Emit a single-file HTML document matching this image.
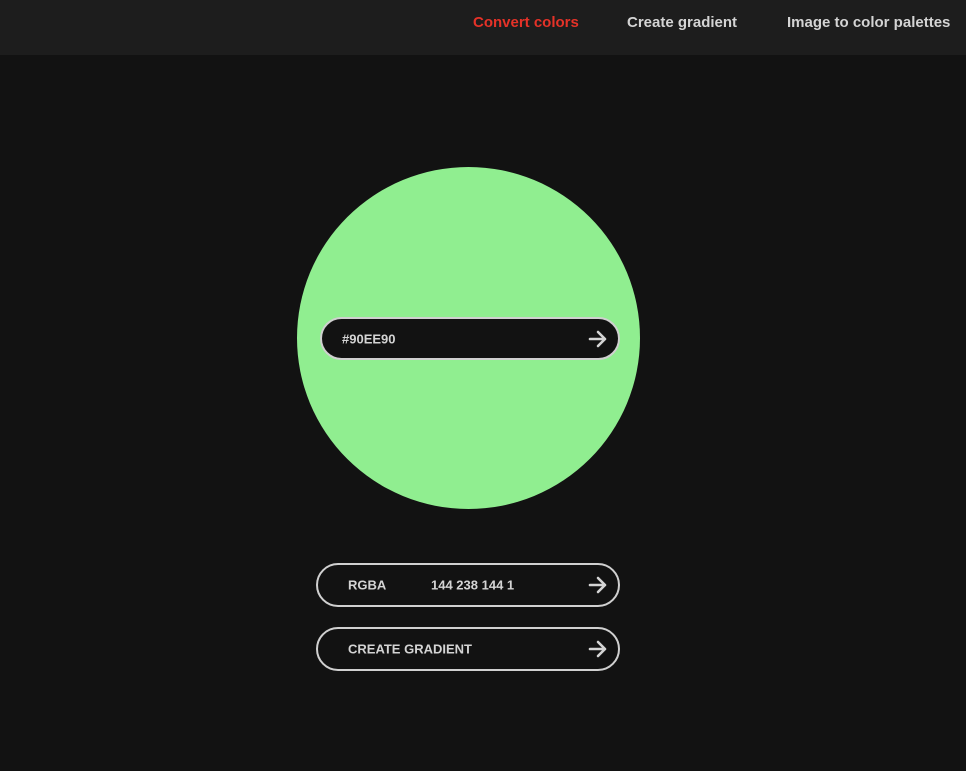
<!DOCTYPE html>
<html><head><style>
*{margin:0;padding:0;box-sizing:border-box}
body{width:966px;height:771px;background:#121212;font-family:"Liberation Sans",sans-serif;position:relative;overflow:hidden}
.hdr{position:absolute;left:0;top:0;width:966px;height:55px;background:#1d1d1d}
.nav{position:absolute;top:14px;font-size:15px;font-weight:bold;color:#d4d4d4;white-space:nowrap}
.circle{position:absolute;left:297px;top:167px;width:343px;height:342px;border-radius:50%;background:#90ee90}
.pill{position:absolute;border:2px solid #d0d0d0;border-radius:24px;background:#121212;color:#d4d4d4;font-weight:bold;font-size:13px}
.pill span{position:absolute;top:50%;transform:translateY(-50%);white-space:nowrap}
.pill svg{position:absolute;right:9px;top:50%;transform:translateY(-50%)}
</style></head><body>
<div class="hdr"></div>
<div class="nav" style="left:473px;color:#e53228">Convert colors</div>
<div class="nav" style="left:627px">Create gradient</div>
<div class="nav" style="left:787px">Image to color palettes</div>
<div class="circle"></div>
<div class="pill" style="left:320px;top:317px;width:300px;height:43px"><span style="left:20px">#90EE90</span>
<svg width="22" height="22" viewBox="0 0 22 22"><path d="M3 11H18M11 4L18 11L11 18" stroke="#d4d4d4" stroke-width="2.6" fill="none" stroke-linecap="round" stroke-linejoin="round"/></svg></div>
<div class="pill" style="left:316px;top:563px;width:304px;height:44px"><span style="left:30px">RGBA</span><span style="left:113px">144 238 144 1</span>
<svg width="22" height="22" viewBox="0 0 22 22"><path d="M3 11H18M11 4L18 11L11 18" stroke="#d4d4d4" stroke-width="2.6" fill="none" stroke-linecap="round" stroke-linejoin="round"/></svg></div>
<div class="pill" style="left:316px;top:627px;width:304px;height:44px"><span style="left:30px">CREATE GRADIENT</span>
<svg width="22" height="22" viewBox="0 0 22 22"><path d="M3 11H18M11 4L18 11L11 18" stroke="#d4d4d4" stroke-width="2.6" fill="none" stroke-linecap="round" stroke-linejoin="round"/></svg></div>
</body></html>
